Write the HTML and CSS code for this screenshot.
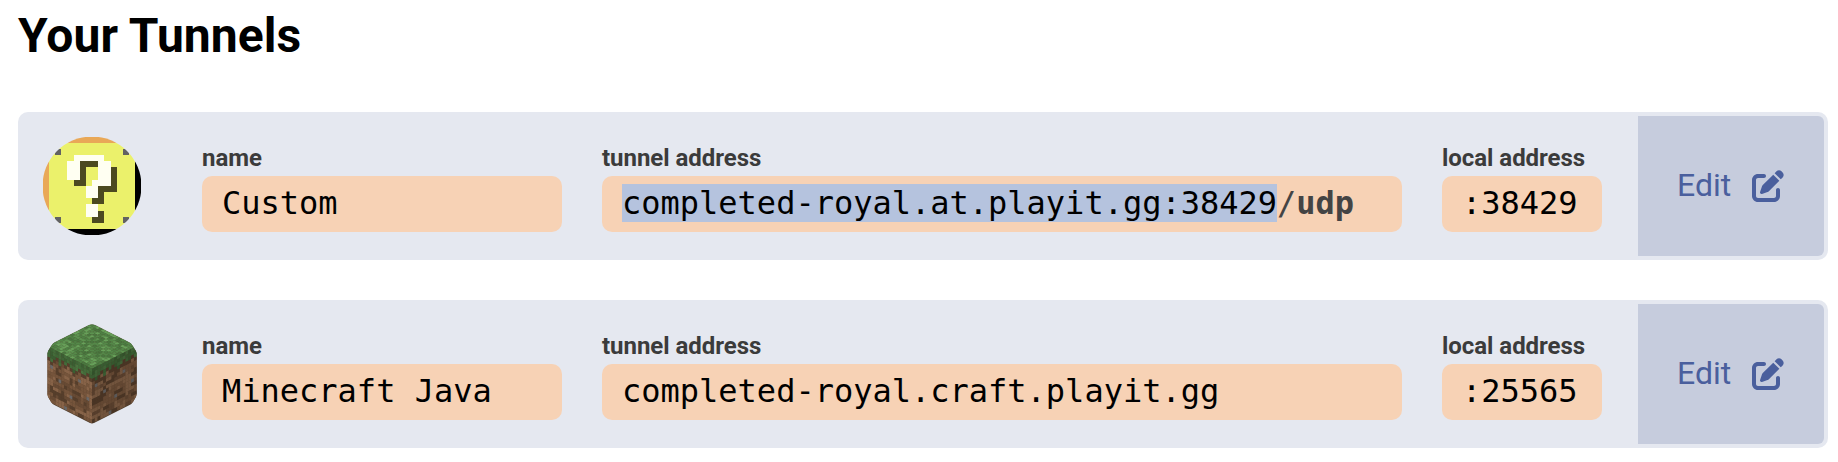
FILE: index.html
```html
<!DOCTYPE html>
<html lang="en">
<head>
<meta charset="utf-8">
<title>Your Tunnels</title>
<link rel="stylesheet" href="styles.css">
</head>
<body>
<main class="page">
  <h1 class="title">Your Tunnels</h1>
  <section class="tunnels">
    <article class="tunnel">
      <svg class="avatar" viewBox="0 0 100 100" aria-hidden="true">
        <defs><clipPath id="round"><circle cx="50" cy="50" r="49.5"/></clipPath></defs>
        <g clip-path="url(#round)">
          <g id="question" transform="translate(.7 .5) scale(6.17)" shape-rendering="crispEdges"></g>
        </g>
      </svg>
      <div class="fields">
        <div class="field field-name"><span class="label">name</span><div class="value">Custom</div></div>
        <div class="field field-tunnel"><span class="label">tunnel address</span><div class="value"><span class="selected">completed-royal.at.playit.gg:38429</span><span class="slash">/</span><b class="proto">udp</b></div></div>
        <div class="field field-local"><span class="label">local address</span><div class="value">:38429</div></div>
      </div>
      <a class="edit"><span class="edit-text">Edit</span><svg class="edit-icon" viewBox="0 0 512 512"><path d="M471.6 21.7c-21.9-21.9-57.3-21.9-79.2 0L362.3 51.7l97.9 97.9 30.1-30.1c21.9-21.9 21.9-57.3 0-79.2L471.6 21.7zm-299.2 220c-6.1 6.1-10.8 13.6-13.5 21.9l-29.6 88.8c-2.9 8.6-.6 18.1 5.8 24.6s15.9 8.7 24.6 5.8l88.8-29.6c8.2-2.7 15.7-7.4 21.9-13.5L437.7 172.3 339.7 74.3 172.4 241.7zM96 64C43 64 0 107 0 160V416c0 53 43 96 96 96H352c53 0 96-43 96-96V320c0-17.7-14.3-32-32-32s-32 14.3-32 32v96c0 17.7-14.3 32-32 32H96c-17.7 0-32-14.3-32-32V160c0-17.7 14.3-32 32-32h96c17.7 0 32-14.3 32-32s-14.3-32-32-32H96z"/></svg></a>
    </article>
    <article class="tunnel">
      <svg class="avatar" viewBox="0 0 100 100" aria-hidden="true">
        <g clip-path="url(#round)">
          <path d="M50 -.5L94.5 22V77.5L50 100L5.5 77.5V22Z" fill="#4e3d2b"/>
          <g id="cube-top" transform="matrix(2.79 1.41 -2.79 1.41 50 -.4)"></g>
          <g id="cube-left" transform="matrix(2.79 1.41 0 3.4 5.4 22.2)"></g>
          <g id="cube-right" transform="matrix(2.79 -1.41 0 3.4 50 44.7)"></g>
        </g>
      </svg>
      <div class="fields">
        <div class="field field-name"><span class="label">name</span><div class="value">Minecraft Java</div></div>
        <div class="field field-tunnel"><span class="label">tunnel address</span><div class="value">completed-royal.craft.playit.gg</div></div>
        <div class="field field-local"><span class="label">local address</span><div class="value">:25565</div></div>
      </div>
      <a class="edit"><span class="edit-text">Edit</span><svg class="edit-icon" viewBox="0 0 512 512"><path d="M471.6 21.7c-21.9-21.9-57.3-21.9-79.2 0L362.3 51.7l97.9 97.9 30.1-30.1c21.9-21.9 21.9-57.3 0-79.2L471.6 21.7zm-299.2 220c-6.1 6.1-10.8 13.6-13.5 21.9l-29.6 88.8c-2.9 8.6-.6 18.1 5.8 24.6s15.9 8.7 24.6 5.8l88.8-29.6c8.2-2.7 15.7-7.4 21.9-13.5L437.7 172.3 339.7 74.3 172.4 241.7zM96 64C43 64 0 107 0 160V416c0 53 43 96 96 96H352c53 0 96-43 96-96V320c0-17.7-14.3-32-32-32s-32 14.3-32 32v96c0 17.7-14.3 32-32 32H96c-17.7 0-32-14.3-32-32V160c0-17.7 14.3-32 32-32h96c17.7 0 32-14.3 32-32s-14.3-32-32-32H96z"/></svg></a>
    </article>
  </section>
</main>
<script src="icons.js"></script>
</body>
</html>
```

FILE: styles.css
```css
* { box-sizing: border-box; }
body {
  margin: 0;
  background: #fff;
  color: #000;
  font-family: Roboto, sans-serif;
}
.page { padding: 8px 10px 0 18px; }
.title {
  margin: 0 0 48px;
  font-size: 48px;
  line-height: 56px;
  font-weight: 700;
  letter-spacing: 0.08px;
}
.tunnels { display: flex; flex-direction: column; gap: 40px; }
.tunnel {
  display: flex;
  height: 148px;
  padding: 4px;
  border-radius: 10px;
  background: #e5e8f0;
}
.avatar {
  flex: none;
  width: 100px;
  height: 100px;
  margin: 20px 60px 0 20px;
}
.fields { display: flex; gap: 40px; flex: 1; }
.field { padding-top: 28px; }
.field-name { width: 360px; }
.field-tunnel { width: 800px; }
.field-local { width: 160px; }
.label {
  display: block;
  height: 32px;
  color: #3b3b3b;
  font-size: 24px;
  line-height: 28px;
  font-weight: 700;
  letter-spacing: -0.04px;
}
.value {
  height: 56px;
  padding: 0 20px;
  border-radius: 10px;
  background: #f7d2b5;
  font-family: "DejaVu Sans Mono", monospace;
  font-size: 32px;
  line-height: 54px;
  white-space: nowrap;
}
.selected { background: #b5c3de; }
.slash, .proto { color: #444; }
.edit {
  display: flex;
  align-items: center;
  justify-content: space-between;
  width: 186px;
  padding: 0 40px 0 39px;
  border-radius: 0 6px 6px 0;
  background: #c6ccdd;
  color: #4a5f9d;
  font-size: 32px;
}
.edit-text { padding-bottom: 2px; }
.edit-icon { width: 32px; height: 32px; fill: currentColor; }
```

FILE: icons.js
```js
const NS = "http://www.w3.org/2000/svg";

function pixel(group, x, y, fill, size) {
  const r = document.createElementNS(NS, "rect");
  r.setAttribute("x", x);
  r.setAttribute("y", y);
  r.setAttribute("width", size);
  r.setAttribute("height", size);
  r.setAttribute("fill", fill);
  group.appendChild(r);
}

// Question block, one character per texture pixel.
const block = [
  "oooooooooooooooo",
  "oyyyyyyyyyyyyyyk",
  "oygyyyyyyyyyygyk",
  "oyyyywwwwwyyyyyk",
  "oyyywwdddwwyyyyk",
  "oyyywwdyywwdyyyk",
  "oyyywwdyywwdyyyk",
  "oyyyyddywwwdyyyk",
  "oyyyyyywwdddyyyk",
  "oyyyyyywwdyyyyyk",
  "oyyyyyyyddyyyyyk",
  "oyyyyyywwyyyyyyk",
  "oyyyyyywwdyyyyyk",
  "oygyyyyyddyyygyk",
  "oyyyyyyyyyyyyyyk",
  "kkkkkkkkkkkkkkkk"
];
const blockColors = { o: "#e9a857", y: "#ebf16b", g: "#626262", w: "#fffff2", d: "#4c4a20", k: "#000" };
const question = document.getElementById("question");
block.forEach((row, y) => [...row].forEach((c, x) => pixel(question, x, y, blockColors[c], 1)));

// Grass cube faces, 16 x 16 texture pixels each.
let seed = 41;
function rand() {
  seed = (seed * 16807) % 2147483647;
  return seed / 2147483647;
}
function shade(rgb, k) {
  return "rgb(" + rgb.map(v => Math.round(v * k)).join(",") + ")";
}
const greens = [[78, 128, 68], [84, 136, 73], [84, 136, 73], [92, 147, 80], [73, 119, 63], [103, 161, 90]];
const browns = [[150, 110, 80], [130, 93, 66], [130, 93, 66], [96, 69, 48], [150, 110, 80], [114, 82, 58]];
const fringe = [3, 4, 3, 2, 4, 2, 3, 2, 3, 4, 3, 2, 3, 3, 2, 3];
const stones = ["1,5", "4,8", "11,5", "8,11", "14,9", "6,15", "13,2"];

function pick(list) { return list[Math.floor(rand() * list.length)]; }

function side(id, light) {
  const g = document.getElementById(id);
  for (let y = 0; y < 16; y++) {
    let c;
    for (let x = 0; x < 16; x++) {
      // Dirt flecks often run across two neighbouring pixels.
      if (!c || rand() > 0.35) c = pick(browns);
      let fill = shade(c, light);
      if (y < fringe[x]) fill = shade(pick(greens.slice(0, 5)), light * 0.88);
      else if (y === fringe[x]) fill = shade([96, 69, 48], light);
      else if (stones.includes(x + "," + y)) fill = shade([118, 116, 116], light);
      pixel(g, x, y, fill, 1.05);
    }
  }
}

const cubeTop = document.getElementById("cube-top");
for (let y = 0; y < 16; y++)
  for (let x = 0; x < 16; x++) pixel(cubeTop, x, y, shade(pick(greens), 1), 1.05);
side("cube-left", 0.9);
side("cube-right", 0.76);
```
